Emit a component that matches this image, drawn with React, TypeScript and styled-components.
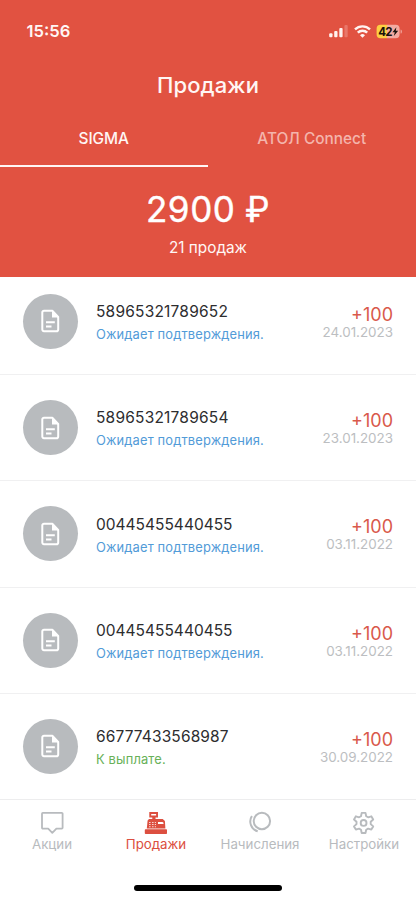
import React from "react";
import styled, { createGlobalStyle } from "styled-components";

const RED = "#e15241";
const GREY = "#b8bbbe";

const Global = createGlobalStyle`
  * { box-sizing: border-box; }
  body { margin: 0; background: #fff; font-family: Inter, "Noto Sans", sans-serif; }
`;

const Screen = styled.div`
  width: 416px;
  height: 900px;
  display: flex;
  flex-direction: column;
  overflow: hidden;
  background: #fff;
`;

const Header = styled.header`
  height: 277px;
  flex: none;
  display: flex;
  flex-direction: column;
  background: ${RED};
  color: #fff6f4;
`;

const StatusBar = styled.div`
  height: 62px;
  display: flex;
  align-items: center;
  justify-content: space-between;
  padding: 0 13px 0 26.5px;
`;

const Clock = styled.span`
  font-size: 16.6px;
  font-weight: 600;
`;

const Indicators = styled.div`
  display: flex;
  align-items: center;
  gap: 5px;
`;

const Title = styled.h1`
  height: 46px;
  margin: 0;
  text-align: center;
  font-size: 22px;
  line-height: 46px;
  font-weight: 500;
  letter-spacing: 0.1px;
`;

const Tabs = styled.div`
  display: flex;
  height: 58.5px;
`;

const Tab = styled.button<{ $active?: boolean }>`
  flex: 1;
  border: 0;
  border-bottom: 2.5px solid ${(p) => (p.$active ? "#fff6f4" : "transparent")};
  padding: 5px 0.5px 0 0;
  background: none;
  font: 500 15.4px Inter, sans-serif;
  color: ${(p) => (p.$active ? "#fff6f4" : "#f4b5ac")};
`;

const Total = styled.div`
  margin-top: 21px;
  text-align: center;
  font-size: 35px;
  line-height: 42px;
  font-weight: 400;
  letter-spacing: 0.6px;
  word-spacing: -1px;
  color: #fff;
  -webkit-text-stroke: 0.4px #fff;
`;

const Count = styled.div`
  margin-top: 8px;
  text-align: center;
  font-size: 15.3px;
  line-height: 20px;
`;

const List = styled.main`
  flex: none;
  height: 522px;
  overflow: hidden;
`;

const Row = styled.article`
  display: flex;
  height: 106.3px;
  padding: 25px 23px 0;
  border-bottom: 1px solid #f0f0f1;
  &:first-child { height: 98px; padding-top: 16.5px; }
`;

const Avatar = styled.div`
  width: 55px;
  height: 55px;
  flex: none;
  display: flex;
  align-items: center;
  justify-content: center;
  border-radius: 50%;
  background: ${GREY};
`;

const Details = styled.div`
  flex: 1;
  padding: 7.3px 0 0 18px;
`;

const Code = styled.div<{ $tracking: number }>`
  font-size: 15.5px;
  line-height: 22px;
  letter-spacing: ${(p) => p.$tracking}px;
  color: #2d2d2f;
`;

const State = styled.div<{ $paid?: boolean }>`
  margin-top: 2px;
  font-size: 12.9px;
  line-height: 20px;
  letter-spacing: 0.15px;
  color: ${(p) => (p.$paid ? "#68b158" : "#529bd8")};
`;

const Amount = styled.div`
  padding-top: 10px;
  text-align: right;
`;

const Sum = styled.div`
  font-size: 18px;
  line-height: 21px;
  color: #d9594b;
`;

const DateText = styled.div`
  font-size: 13.4px;
  line-height: 15px;
  color: #bcbec1;
`;

const Nav = styled.nav`
  height: 75px;
  display: grid;
  grid-template-columns: repeat(4, 1fr);
  border-top: 1px solid #ededee;
`;

const NavItem = styled.a<{ $active?: boolean }>`
  display: flex;
  flex-direction: column;
  align-items: center;
  padding-top: 10px;
  font-size: 13.3px;
  line-height: 18px;
  color: ${(p) => (p.$active ? "#dc4f40" : GREY)};
`;

const HomeBar = styled.div`
  width: 148px;
  height: 5.5px;
  margin: 11px auto 0;
  border-radius: 3px;
  background: #000;
`;

const Signal = () => (
  <svg width="20" height="14" viewBox="0 0 20 14">
    <rect x="0.2" y="9.2" width="3.3" height="4" rx="1" fill="#fff3f0" />
    <rect x="5.2" y="7" width="3.3" height="6.2" rx="1" fill="#fff3f0" />
    <rect x="10.3" y="4" width="3.3" height="9.2" rx="1" fill="#fff3f0" />
    <rect x="15.4" y="1" width="3.3" height="12.2" rx="1" fill="#e9776a" />
  </svg>
);

const Wifi = () => (
  <svg width="17" height="13" viewBox="0 0 17 13" fill="none" stroke="#fff3f0" strokeWidth="2.4">
    <path d="M1 4.4a10.8 10.8 0 0 1 15 0" />
    <path d="M3.8 7.7a6.6 6.6 0 0 1 9.4 0" />
    <path d="M6 10.2a3.5 3.5 0 0 1 5 0L8.5 12.7Z" fill="#fff3f0" stroke="none" />
  </svg>
);

const Battery = () => (
  <svg width="27" height="15" viewBox="0 0 27 15">
    <path d="M4.5.8H11v13.4H4.5A4 4 0 0 1 .6 10.2V4.8A4 4 0 0 1 4.5.8Z" fill="#fdcf43" />
    <path d="M11 .8h8.7a4 4 0 0 1 3.9 4v5.4a4 4 0 0 1-3.9 4H11Z" fill="#f3aaa0" />
    <path d="M24.6 5.4c1.7.5 1.7 3.7 0 4.2Z" fill="#f3aaa0" />
    <text x="2.2" y="11.8" fontFamily="Inter, sans-serif" fontWeight="700" fontSize="11.5" letterSpacing="-.6" fill="#18120c">42</text>
    <path d="M20.4 3.2 16.5 8.2h2.3l-1 3.8 4.4-5.2h-2.5Z" fill="#18120c" />
  </svg>
);

const DocumentIcon = () => (
  <svg width="20" height="24" viewBox="0 0 20 24" fill="none" stroke="#fff" strokeWidth="2" strokeLinejoin="round">
    <path d="M3 1.8h8.3L17.2 8v12.4A1.8 1.8 0 0 1 15.4 22.2H3A1.7 1.7 0 0 1 1.3 20.5V3.5A1.7 1.7 0 0 1 3 1.8Z" />
    <path d="M11 2v6.5h6.2Z" fill="#fff" stroke="none" />
    <path d="M5 13.3h8.8M5 17.5h5.5" />
  </svg>
);

const BubbleIcon = () => (
  <svg width="24" height="25" viewBox="0 0 24 25" fill="none" stroke="currentColor" strokeWidth="1.8" strokeLinejoin="round">
    <path d="M2.8 2.9h19a.8.8 0 0 1 .8.8v14.1a.8.8 0 0 1-.8.8h-5.4L12.3 22.8l-4.1-4.2H2.8a.8.8 0 0 1-.8-.8V3.7a.8.8 0 0 1 .8-.8Z" />
  </svg>
);

const RegisterIcon = () => (
  <svg width="24" height="25" viewBox="0 0 24 25" fill="currentColor">
    <path fillRule="evenodd" d="M5.3 2H14v5.5h-2.5V9h7.200l2.200 2 .5 7.500H2.800L3.600 10.500 5 9h3.300V7.500h-3ZM7.200 4v1.400h4.900V4Z" />
    <rect x=".8" y="19.200" width="22.200" height="4.800" rx=".8" />
    <g fill="#fff">
      <path d="M14 12h4.500l1 .8v1.200H14Z" />
      <path d="M5 12h1.600v1H5zM8 12h1.600v1H8zM10.800 12h1.200v1h-1.200zM5 14.100h1.600v1H5zM8 14.100h1.600v1H8zM10.800 14.100h1.200v1h-1.200zM5 16.200h1.600v1H5zM8 16.200h1.600v1H8zM10.800 16.200h1.200v1h-1.200z" fillOpacity=".75" />
    </g>
  </svg>
);

const CoinsIcon = () => (
  <svg width="24" height="25" viewBox="0 0 24 25" fill="none" stroke="currentColor" strokeWidth="2">
    <circle cx="13.9" cy="11" r="8.2" />
    <path d="M3.900 6a10.200 10.200 0 0 0 5.800 15.300" />
  </svg>
);

const GearIcon = () => (
  <svg width="24" height="25" viewBox="0 0 24 25" fill="none" stroke="currentColor" strokeWidth="1.9" strokeLinejoin="round">
    <path d="M9.700 2.900h3.800l.7 3.300 1.900 1.100 3.200-1 1.900 3.200-2.500 2.300v2.300l2.500 2.300-1.900 3.200-3.200-1-1.900 1.100-.7 3.300h-3.800l-.7-3.300-1.900-1.100-3.200 1L2 16.400l2.500-2.300v-2.300L2 9.500l1.900-3.200 3.200 1L9 6.200Z" />
    <circle cx="11.600" cy="12.950" r="2.900" />
  </svg>
);

const sales = [
  { code: "58965321789652", tracking: 0.2, date: "24.01.2023" },
  { code: "58965321789654", tracking: 0.2, date: "23.01.2023" },
  { code: "00445455440455", tracking: 0, date: "03.11.2022" },
  { code: "00445455440455", tracking: 0, date: "03.11.2022" },
  { code: "66777433568987", tracking: 0.12, date: "30.09.2022", paid: true },
];

export default function App() {
  return (
    <Screen>
      <Global />
      <Header>
        <StatusBar>
          <Clock>15:56</Clock>
          <Indicators><Signal /><Wifi /><Battery /></Indicators>
        </StatusBar>
        <Title>Продажи</Title>
        <Tabs>
          <Tab $active>SIGMA</Tab>
          <Tab>АТОЛ Connect</Tab>
        </Tabs>
        <Total>2900 ₽</Total>
        <Count>21 продаж</Count>
      </Header>
      <List>
        {sales.map((s, i) => (
          <Row key={i}>
            <Avatar><DocumentIcon /></Avatar>
            <Details>
              <Code $tracking={s.tracking}>{s.code}</Code>
              <State $paid={s.paid}>{s.paid ? "К выплате." : "Ожидает подтверждения."}</State>
            </Details>
            <Amount>
              <Sum>+100</Sum>
              <DateText>{s.date}</DateText>
            </Amount>
          </Row>
        ))}
      </List>
      <Nav>
        <NavItem><BubbleIcon />Акции</NavItem>
        <NavItem $active><RegisterIcon />Продажи</NavItem>
        <NavItem><CoinsIcon />Начисления</NavItem>
        <NavItem><GearIcon />Настройки</NavItem>
      </Nav>
      <HomeBar />
    </Screen>
  );
}
